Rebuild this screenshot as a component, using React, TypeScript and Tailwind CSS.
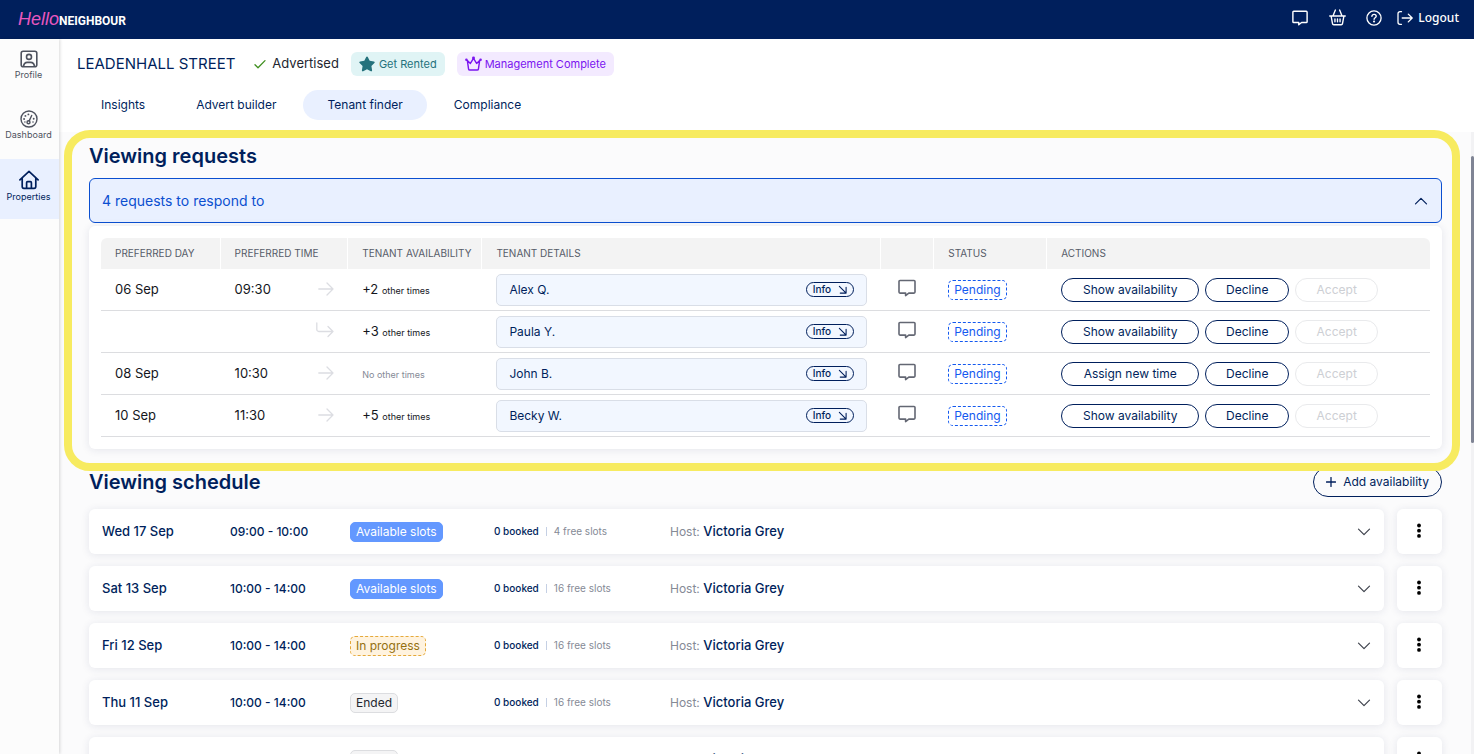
import type { ReactNode } from 'react';

type IconProps = { className?: string };

const requests = [
  { day: '06 Sep', time: '09:30', others: 2, name: 'Alex Q.', action: 'Show availability' },
  { day: '', time: '', others: 3, name: 'Paula Y.', action: 'Show availability' },
  { day: '08 Sep', time: '10:30', others: 0, name: 'John B.', action: 'Assign new time' },
  { day: '10 Sep', time: '11:30', others: 5, name: 'Becky W.', action: 'Show availability' },
];

const schedule = [
  { date: 'Wed 17 Sep', time: '09:00 - 10:00', status: 'Available slots', free: 4 },
  { date: 'Sat 13 Sep', time: '10:00 - 14:00', status: 'Available slots', free: 16 },
  { date: 'Fri 12 Sep', time: '10:00 - 14:00', status: 'In progress', free: 16 },
  { date: 'Thu 11 Sep', time: '10:00 - 14:00', status: 'Ended', free: 16 },
  { date: 'Wed 10 Sep', time: '10:00 - 14:00', status: 'Ended', free: 16 },
];

const badgeStyles: Record<string, string> = {
  'Available slots': 'border-[#6398ff] bg-[#6398ff] text-white',
  'In progress': 'border-dashed border-[#e5a93a] bg-[#fff3df] text-[#94700f]',
  Ended: 'border-[#dcdde0] bg-[#f4f4f5] text-[#23262f]',
};

const tabs = ['Insights', 'Advert builder', 'Tenant finder', 'Compliance'];

function Svg({ className, box = 16, width = 1.3, children }: IconProps & { box?: number; width?: number; children: ReactNode }) {
  return (
    <svg
      className={className}
      viewBox={`0 0 ${box} ${box}`}
      fill="none"
      stroke="currentColor"
      strokeWidth={width}
      strokeLinecap="round"
      strokeLinejoin="round"
      aria-hidden="true"
    >
      {children}
    </svg>
  );
}

const ChatIcon = ({ className }: IconProps) => (
  <Svg className={className} box={18} width={1.6}>
    <path d="M2 1.500h14a1 1 0 0 1 1 1v10.600a1 1 0 0 1-1 1h-5.200L7.600 16.600v-2.500H2a1 1 0 0 1-1-1V2.500a1 1 0 0 1 1-1z" />
  </Svg>
);

const BasketIcon = ({ className }: IconProps) => (
  <Svg className={className}>
    <path d="M.7 6.600h14.600M2 6.800l1.300 7a1.200 1.200 0 0 0 1.200 1h7a1.200 1.200 0 0 0 1.200-1l1.300-7M6 1 3.800 6.300M10 1l2.200 5.300M5.600 9.300v2.800M8 9.300v2.800M10.400 9.300v2.800" />
  </Svg>
);

const HelpIcon = ({ className }: IconProps) => (
  <Svg className={className}>
    <circle cx="8" cy="8" r="7.1" />
    <path d="M5.900 6.300c.1-1.200 1-1.900 2.200-1.900s2.100.7 2.100 1.800c0 1.500-2.100 1.500-2.100 3" strokeWidth="1.4" />
    <circle cx="8.050" cy="11.500" r=".45" fill="currentColor" />
  </Svg>
);

const LogoutIcon = ({ className }: IconProps) => (
  <Svg className={className}>
    <path d="M4.500 1.700H3a2 2 0 0 0-2 2v8.600a2 2 0 0 0 2 2h1.500M5.200 8H15M11.300 4.100 15.200 8l-3.900 3.900" />
  </Svg>
);

const ProfileIcon = ({ className }: IconProps) => (
  <Svg className={className} box={18} width={1.6}>
    <rect x="1.200" y="1.200" width="15.600" height="15.600" rx="2" />
    <circle cx="9" cy="6.900" r="2.500" />
    <path d="M3.600 16.200c.3-2.600 1.800-3.800 3.700-3.800h3.400c1.900 0 3.400 1.200 3.700 3.800" />
  </Svg>
);

const GaugeIcon = ({ className }: IconProps) => (
  <Svg className={className} box={18} width={1.4}>
    <circle cx="9" cy="9" r="8" />
    <circle cx="8.500" cy="12.300" r="1.500" />
    <path d="m9.200 10.900 2.500-5.400" />
    <g fill="currentColor" stroke="none">
      <circle cx="8.400" cy="4.400" r=".95" />
      <circle cx="5.400" cy="5.900" r=".95" />
      <circle cx="4.100" cy="9" r=".95" />
      <circle cx="13.700" cy="8.700" r=".95" />
      <circle cx="4.900" cy="12" r=".8" />
      <circle cx="13" cy="12" r=".8" />
    </g>
  </Svg>
);

const HomeIcon = ({ className }: IconProps) => (
  <Svg className={className} box={20} width={1.7}>
    <path d="M.9 9.800 10 1.400l9.100 8.400M3.200 8v8.600a1.700 1.700 0 0 0 1.700 1.700h10.200a1.700 1.700 0 0 0 1.700-1.700V8M7.600 18v-5.300a1 1 0 0 1 1-1h2.800a1 1 0 0 1 1 1V18" />
  </Svg>
);

const CheckIcon = ({ className }: IconProps) => (
  <Svg className={className} box={12}>
    <path d="m1 6.800 3 3L11 2.600" />
  </Svg>
);

const StarIcon = ({ className }: IconProps) => (
  <svg className={className} viewBox="0 0 16 16" fill="currentColor" aria-hidden="true">
    <path d="M8 .4c.4 0 .7.2.8.5l1.900 3.900 4.200.6c.8.1 1.100 1.100.5 1.600l-3 3 .7 4.300c.1.800-.7 1.300-1.300 1L8 13.300l-3.800 2c-.7.300-1.400-.2-1.300-1l.7-4.300-3-3C0 6.500.3 5.500 1.100 5.400l4.200-.6L7.200.9c.1-.3.400-.5.800-.5z" />
  </svg>
);

const CrownIcon = ({ className }: IconProps) => (
  <Svg className={className} box={18} width={1.5}>
    <path d="m2.500 4.800 3.200 3.100L9 2.600l3.300 5.300 3.200-3.100-1.300 9a1.300 1.300 0 0 1-1.300 1.100H5.100a1.300 1.300 0 0 1-1.300-1.100z" />
    <circle cx="9" cy="2" r=".8" />
    <circle cx="1.500" cy="4" r=".6" />
    <circle cx="16.500" cy="4" r=".6" />
  </Svg>
);

const ArrowIcon = ({ className }: IconProps) => (
  <Svg className={className}>
    <path d="M.8 8h14.200M9 2l6 6-6 6" />
  </Svg>
);

const BranchIcon = ({ className }: IconProps) => (
  <Svg className={className} box={18}>
    <path d="M.8 1v6.500a2 2 0 0 0 2 2H17M12 4.500l5 5-5 5" />
  </Svg>
);

const CornerIcon = ({ className }: IconProps) => (
  <Svg className={className} box={10} width={1.2}>
    <path d="m1.500 1.500 7 7M9 2.500V9H2.500" />
  </Svg>
);

const ChevronIcon = ({ className }: IconProps) => (
  <Svg className={className} box={14} width={1.2}>
    <path d="m1.500 4.200 5.500 5.500 5.500-5.500" />
  </Svg>
);

const PlusIcon = ({ className }: IconProps) => (
  <Svg className={className} box={10}>
    <path d="M5 .5v9M.5 5h9" />
  </Svg>
);

const sideLinks = [
  { label: 'Profile', Icon: ProfileIcon, active: false },
  { label: 'Dashboard', Icon: GaugeIcon, active: false },
  { label: 'Properties', Icon: HomeIcon, active: true },
];

function TopBar() {
  return (
    <header className="flex h-[39px] shrink-0 items-center justify-between bg-[#001f5c] pr-[15px] pl-[18px] text-white">
      <a href="#" className="flex items-baseline leading-5">
        <span className="font-['Liberation_Sans',sans-serif] text-[18px] text-[#e857bf] italic">Hello</span>
        <span className="font-[Roboto,sans-serif] text-[12px] font-bold">NEIGHBOUR</span>
      </a>
      <nav className="flex items-center">
        <a href="#" aria-label="Messages" className="mr-[21px] mb-1">
          <ChatIcon className="size-4" />
        </a>
        <a href="#" aria-label="Basket" className="mr-5 mb-1">
          <BasketIcon className="size-[17px]" />
        </a>
        <a href="#" aria-label="Help" className="mr-[15px] mb-1">
          <HelpIcon className="size-4" />
        </a>
        <a href="#" className="mb-1 flex items-center gap-[5px] font-['Noto_Sans',sans-serif] text-[12px] font-medium">
          <LogoutIcon className="size-4" />
          Logout
        </a>
      </nav>
    </header>
  );
}

function Sidebar() {
  return (
    <nav className="z-10 flex w-[59px] shrink-0 flex-col bg-[#fcfcfc] shadow-[1px_0_3px_rgba(0,0,0,0.15)]">
      {sideLinks.map(({ label, Icon, active }) => (
        <a
          key={label}
          href="#"
          className={`flex h-[60px] flex-col items-center gap-px pt-[11px] pr-[2px] text-[9px] leading-3 ${
            active ? 'bg-[#e9f0ff] text-[#001f5c]' : 'text-[#4e525e]'
          }`}
        >
          <Icon className={active ? 'size-5' : 'size-[18px]'} />
          {label}
        </a>
      ))}
    </nav>
  );
}

function PropertyHeader() {
  return (
    <div className="h-[93px] shrink-0 bg-white pt-3 pl-[18px]">
      <div className="flex h-[26px] items-center gap-3">
        <h1 className="mr-[7px] text-[15px] text-[#001f5c]">LEADENHALL STREET</h1>
        <span className="flex items-center gap-[6px] text-[13px] text-[#23262f]">
          <CheckIcon className="size-3 text-[#3f8f1f]" />
          Advertised
        </span>
        <span className="flex h-6 items-center gap-1 rounded-md bg-[#e0f4f5] px-2 text-[11px] text-[#25727c]">
          <StarIcon className="size-4" />
          Get Rented
        </span>
        <span className="flex h-6 items-center gap-[3px] rounded-md bg-[#f3eaff] px-2 text-[11px] text-[#7a14f0]">
          <CrownIcon className="size-[17px]" />
          Management Complete
        </span>
      </div>
      <nav className="mt-[13px] flex gap-[3px]">
        {tabs.map((tab) => (
          <a
            key={tab}
            href="#"
            className={`rounded-full px-6 text-[12px] leading-[30px] text-[#001f5c] ${
              tab === 'Tenant finder' ? 'bg-[#e9f0ff]' : ''
            }`}
          >
            {tab}
          </a>
        ))}
      </nav>
    </div>
  );
}

function RequestsTable() {
  const pill = 'h-6 rounded-full border text-[12px]';

  return (
    <table className="w-full table-fixed border-separate border-spacing-0 text-left">
      <colgroup>
        <col className="w-[9%]" />
        <col className="w-[9.6%]" />
        <col className="w-[10.1%]" />
        <col className="w-[30%]" />
        <col className="w-[4%]" />
        <col className="w-[8.5%]" />
        <col />
      </colgroup>
      <thead>
        <tr className="h-[31px] text-[10px] whitespace-nowrap text-[#565b68] [&>th]:border-r [&>th]:border-white [&>th]:bg-[#f3f3f3] [&>th]:px-[14px] [&>th]:font-normal [&>th:last-child]:border-r-0">
          <th className="rounded-tl-md">PREFERRED DAY</th>
          <th>PREFERRED TIME</th>
          <th>TENANT AVAILABILITY</th>
          <th>TENANT DETAILS</th>
          <th aria-label="Messages" />
          <th>STATUS</th>
          <th className="rounded-tr-md">ACTIONS</th>
        </tr>
      </thead>
      <tbody>
        {requests.map((r) => (
          <tr key={r.name} className="h-[42px] text-[13px] text-[#14161c] [&>td]:border-b [&>td]:border-[#dcdde0] [&>td]:px-[14px]">
            <td>{r.day}</td>
            <td>
              <div className="flex items-center justify-between">
                <span>{r.time}</span>
                {r.day ? <ArrowIcon className="mb-[2px] size-4 text-[#dcdde2]" /> : <BranchIcon className="mb-[2px] size-[18px] text-[#dcdde2]" />}
              </div>
            </td>
            <td>
              {r.others ? (
                <>
                  +{r.others} <span className="text-[9px]">other times</span>
                </>
              ) : (
                <span className="text-[9px] text-[#858a96]">No other times</span>
              )}
            </td>
            <td>
              <div className="flex h-8 items-center justify-between rounded-[5px] border border-[#d9dee7] bg-[#f2f7ff] px-3 text-[12px] text-[#001f5c]">
                {r.name}
                <button className="flex h-[15px] items-center gap-[7px] rounded-full border border-[#001f5c] px-[6px] text-[10px] font-medium">
                  Info
                  <CornerIcon className="size-[9px]" />
                </button>
              </div>
            </td>
            <td>
              <button aria-label={`Message ${r.name}`} className="mb-1 ml-[3px] block text-[#636773]">
                <ChatIcon className="size-[18px]" />
              </button>
            </td>
            <td>
              <span className="inline-block rounded-[5px] border border-dashed border-[#1359f0] px-[5px] text-[12px] leading-[18px] text-[#1359f0]">
                Pending
              </span>
            </td>
            <td>
              <div className="flex gap-[6px]">
                <button className={`${pill} w-[138px] border-[#001f5c] text-[#001f5c]`}>{r.action}</button>
                <button className={`${pill} w-[84px] border-[#001f5c] text-[#001f5c]`}>Decline</button>
                <button disabled className={`${pill} w-[83px] border-[#e9eaec] text-[#cdcfd4]`}>
                  Accept
                </button>
              </div>
            </td>
          </tr>
        ))}
      </tbody>
    </table>
  );
}

export default function App() {
  const card = 'rounded-md bg-white shadow-[0_1px_8px_rgba(30,40,90,0.1)]';

  return (
    <div className="flex h-screen flex-col overflow-hidden font-[Inter,sans-serif]">
      <TopBar />
      <div className="flex min-h-0 flex-1">
        <Sidebar />
        <div className="relative flex min-w-0 flex-1 flex-col">
          <PropertyHeader />
          <main className="min-h-0 flex-1 bg-[#fbfbfc] pr-8 pl-[30px]">
            {/* Viewing requests */}
            <section className="relative pt-[10px]">
              <div className="pointer-events-none absolute -top-[2px] -right-[18px] -bottom-[22px] -left-[25px] z-10 rounded-[26px] border-8 border-[#f7eb60]" />
              <h2 className="text-[20px] leading-7 font-semibold text-[#001f5c]">Viewing requests</h2>
              <button className="mt-2 flex h-[45px] w-full items-center justify-between rounded-md border border-[#0b4fd0] bg-[#e9f0ff] px-3 text-[14px] text-[#0b4fd0]">
                4 requests to respond to
                <ChevronIcon className="mr-px size-[14px] rotate-180 text-[#001f5c]" />
              </button>
              <div className={`${card} mt-[3px] p-3`}>
                <RequestsTable />
              </div>
            </section>

            {/* Viewing schedule */}
            <section className="mt-[18px]">
              <div className="flex items-center justify-between">
                <h2 className="text-[20px] leading-7 font-semibold text-[#001f5c]">Viewing schedule</h2>
                <button className="flex h-[30px] items-center gap-[7px] rounded-full border border-[#001f5c] px-3 text-[12px] text-[#001f5c]">
                  <PlusIcon className="size-[10px]" />
                  Add availability
                </button>
              </div>
              <ul className="mt-3 flex flex-col gap-3">
                {schedule.map((s) => (
                  <li key={s.date} className="flex gap-[13px]">
                    <div className={`${card} flex h-[45px] flex-1 items-center px-[13px] text-[12px] text-[#001f5c]`}>
                      <span className="w-32 text-[13px] font-medium">{s.date}</span>
                      <span className="w-[120px] font-medium">{s.time}</span>
                      <span className="w-36">
                        <span className={`inline-block rounded-[5px] border px-[5px] leading-[18px] ${badgeStyles[s.status]}`}>
                          {s.status}
                        </span>
                      </span>
                      <span className="flex w-44 items-center gap-[7px] text-[10px]">
                        <span className="font-medium">0 booked</span>
                        <span className="h-[9px] w-px bg-[#c5d0e4]" />
                        <span className="text-[#858a96]">{s.free} free slots</span>
                      </span>
                      <span className="flex-1 text-[13px] font-medium">
                        <span className="text-[12px] font-normal text-[#858a96]">Host:</span> Victoria Grey
                      </span>
                      <button aria-label={`Expand ${s.date}`}>
                        <ChevronIcon className="size-[14px] text-[#3f434d]" />
                      </button>
                    </div>
                    <button aria-label={`Options for ${s.date}`} className={`${card} grid size-[45px] place-items-center pr-[2px] pb-[2px]`}>
                      <svg className="h-4 w-1" viewBox="0 0 4 16" aria-hidden="true">
                        <circle cx="2" cy="2.500" r="1.900" />
                        <circle cx="2" cy="7.700" r="1.900" />
                        <circle cx="2" cy="12.900" r="1.900" />
                      </svg>
                    </button>
                  </li>
                ))}
              </ul>
            </section>
          </main>
          <div className="absolute top-[93px] right-0 bottom-0 w-[3px] bg-[#f2f2f4] pt-6">
            <div className="h-[48%] rounded-full bg-[#7f8494]" />
          </div>
        </div>
      </div>
    </div>
  );
}
